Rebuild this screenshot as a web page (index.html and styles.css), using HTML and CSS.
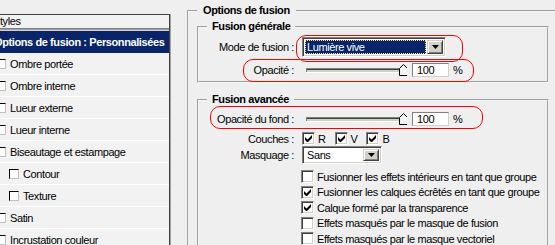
FILE: index.html
```html
<!DOCTYPE html>
<html lang="fr">
<head>
    <meta charset="UTF-8">
    <meta name="viewport" content="width=device-width, initial-scale=1.0">
    <title>Style de calque</title>
    <link rel="stylesheet" href="styles.css">
</head>
<body>
    <div class="dialog">
        <!-- Liste des styles -->
        <div class="styles-panel">
            <div class="panel-head">Styles</div>
            <div class="style-item selected">Options de fusion : Personnalisées</div>
            <div class="style-item"><span class="mini-box"></span>Ombre portée</div>
            <div class="style-item"><span class="mini-box"></span>Ombre interne</div>
            <div class="style-item"><span class="mini-box"></span>Lueur externe</div>
            <div class="style-item"><span class="mini-box"></span>Lueur interne</div>
            <div class="style-item"><span class="mini-box"></span>Biseautage et estampage</div>
            <div class="style-item sub"><span class="mini-box"></span>Contour</div>
            <div class="style-item sub"><span class="mini-box"></span>Texture</div>
            <div class="style-item"><span class="mini-box"></span>Satin</div>
            <div class="style-item"><span class="mini-box"></span>Incrustation couleur</div>
        </div>

        <!-- Options de fusion -->
        <div class="options">
            <fieldset class="group outer">
                <legend>Options de fusion</legend>

                <fieldset class="group general">
                    <legend>Fusion générale</legend>
                    <div class="form-row row-mode">
                        <span class="label">Mode de fusion :</span>
                        <div class="select blend focused">
                            <span class="select-value">Lumière vive</span>
                            <span class="select-btn"><svg width="7" height="4" viewBox="0 0 7 4"><polygon points="0,0 7,0 3.5,4" fill="#000"/></svg></span>
                        </div>
                    </div>
                    <div class="form-row row-opacity">
                        <span class="label">Opacité :</span>
                        <svg class="slider" width="105" height="14" viewBox="0 0 105 14">
                            <rect x="4" y="5" width="97" height="5" fill="#d4d0c8"/>
                            <line x1="4" y1="5.5" x2="101" y2="5.5" stroke="#808080"/>
                            <line x1="5" y1="6.5" x2="100" y2="6.5" stroke="#404040"/>
                            <line x1="4.5" y1="5" x2="4.5" y2="10" stroke="#808080"/>
                            <line x1="4" y1="9.5" x2="101" y2="9.5" stroke="#fff"/>
                            <polygon points="97.5,12.5 97.5,5.5 101.5,1.5 105.5,5.5 105.5,12.5" fill="#f4f4f4" stroke="#000"/>
                        </svg>
                        <span class="field">100</span>
                        <span class="unit">%</span>
                    </div>
                </fieldset>

                <fieldset class="group advanced">
                    <legend>Fusion avancée</legend>
                    <div class="form-row row-fill">
                        <span class="label">Opacité du fond :</span>
                        <svg class="slider" width="105" height="14" viewBox="0 0 105 14">
                            <rect x="4" y="5" width="97" height="5" fill="#d4d0c8"/>
                            <line x1="4" y1="5.5" x2="101" y2="5.5" stroke="#808080"/>
                            <line x1="5" y1="6.5" x2="100" y2="6.5" stroke="#404040"/>
                            <line x1="4.5" y1="5" x2="4.5" y2="10" stroke="#808080"/>
                            <line x1="4" y1="9.5" x2="101" y2="9.5" stroke="#fff"/>
                            <polygon points="97.5,12.5 97.5,5.5 101.5,1.5 105.5,5.5 105.5,12.5" fill="#f4f4f4" stroke="#000"/>
                        </svg>
                        <span class="field">100</span>
                        <span class="unit">%</span>
                    </div>
                    <div class="form-row row-channels">
                        <span class="label">Couches :</span>
                        <span class="check"><svg class="tick" width="7" height="7" viewBox="0 0 7 7"><path d="M0 2v3l2 2h1l4-4V0L2.5 4.5z" fill="#000"/></svg></span><span class="channel">R</span>
                        <span class="check"><svg class="tick" width="7" height="7" viewBox="0 0 7 7"><path d="M0 2v3l2 2h1l4-4V0L2.5 4.5z" fill="#000"/></svg></span><span class="channel">V</span>
                        <span class="check"><svg class="tick" width="7" height="7" viewBox="0 0 7 7"><path d="M0 2v3l2 2h1l4-4V0L2.5 4.5z" fill="#000"/></svg></span><span class="channel">B</span>
                    </div>
                    <div class="form-row row-knockout">
                        <span class="label">Masquage :</span>
                        <div class="select knockout">
                            <span class="select-value">Sans</span>
                            <span class="select-btn"><svg width="7" height="4" viewBox="0 0 7 4"><polygon points="0,0 7,0 3.5,4" fill="#000"/></svg></span>
                        </div>
                    </div>
                    <div class="check-list">
                        <div class="check-row"><span class="check"></span>Fusionner les effets intérieurs en tant que groupe</div>
                        <div class="check-row"><span class="check"><svg class="tick" width="7" height="7" viewBox="0 0 7 7"><path d="M0 2v3l2 2h1l4-4V0L2.5 4.5z" fill="#000"/></svg></span>Fusionner les calques écrêtés en tant que groupe</div>
                        <div class="check-row"><span class="check"><svg class="tick" width="7" height="7" viewBox="0 0 7 7"><path d="M0 2v3l2 2h1l4-4V0L2.5 4.5z" fill="#000"/></svg></span>Calque formé par la transparence</div>
                        <div class="check-row"><span class="check"></span>Effets masqués par le masque de fusion</div>
                        <div class="check-row"><span class="check"></span>Effets masqués par le masque vectoriel</div>
                    </div>
                </fieldset>
            </fieldset>
        </div>
    </div>

    <!-- Annotations rouges par-dessus le dialogue -->
    <span class="mark mark-mode"></span>
    <span class="mark mark-opacity"></span>
    <span class="mark mark-fill"></span>
</body>
</html>
```

FILE: styles.css
```css
/* Dialogue Style de calque */
body {
    margin: 0;
    width: 555px;
    height: 245px;
    overflow: hidden;
    position: relative;
    background-color: #efefef;
    font-family: 'Liberation Sans', Arial, sans-serif;
    font-size: 11px;
    letter-spacing: -0.4px;
    color: #000;
}

.dialog {
    display: flex;
    align-items: flex-start;
}

/* Liste de gauche */
.styles-panel {
    width: 179px;
    margin-left: -10px;
    margin-top: 14px;
    border-top: 1px solid #404040;
    border-right: 1px solid #404040;
    box-shadow: 1px 0 0 #a0a0a0;
    background-color: #f2f2f2;
    flex-shrink: 0;
}

.panel-head {
    height: 13px;
    line-height: 13px;
    padding-left: 3px;
    border-bottom: 1px solid #808080;
    box-shadow: 0 1px 0 #a0a0a0, 0 2px 0 #d4d0c8;
    margin-bottom: 2px;
}

.style-item {
    display: flex;
    align-items: center;
    height: 21px;
    border-bottom: 1px solid #fff;
    padding-left: 6px;
    white-space: nowrap;
}

.style-item.selected {
    height: 22px;
    padding-left: 4px;
    background-color: #0a246a;
    color: #fff;
    font-weight: bold;
    border-bottom: none;
}

.style-item.sub {
    padding-left: 19px;
}

.mini-box {
    width: 8px;
    height: 8px;
    margin-right: 4px;
    background-color: #fff;
    border: 1px solid #000;
    border-right-color: #c0c0c0;
    border-bottom-color: #c0c0c0;
    flex-shrink: 0;
}

/* Colonne de droite */
.options {
    flex: 1;
    padding-top: 4px;
    margin-left: 17px;
}

.group {
    margin: 0;
    padding: 0;
    border: 2px groove #f4f4f4;
    min-width: 0;
}

.group legend {
    font-weight: bold;
    line-height: 13px;
    padding: 0 6px;
    margin-left: 8px;
}

.outer {
    width: 376px;
    height: 260px;
}

.general {
    margin: 3px 16px 0 8px;
    padding: 4px 0 4px 0;
}

.advanced {
    margin: 10px 16px 0 8px;
    padding: 6px 0 0 0;
    height: 200px;
}

.group.general legend,
.group.advanced legend {
    padding: 0 5px;
}

.form-row {
    display: flex;
    align-items: center;
}

.label {
    width: 95px;
    margin-right: 8px;
    text-align: right;
    white-space: nowrap;
    flex-shrink: 0;
}

.row-mode {
    height: 20px;
}

.row-opacity {
    height: 14px;
    margin-top: 6px;
}

.row-fill {
    height: 14px;
}

.row-channels {
    height: 13px;
    margin-top: 6px;
}

.row-knockout {
    height: 18px;
    margin-top: 1px;
}

/* Listes déroulantes */
.select {
    display: flex;
    box-sizing: border-box;
    height: 100%;
    border: 1px solid;
    border-color: #808080 #fff #fff #808080;
    box-shadow: inset 1px 1px 0 #404040, inset -1px -1px 0 #d4d0c8;
    padding: 2px;
    background-color: #fff;
}

.select.blend {
    width: 144px;
}

.select.knockout {
    width: 80px;
}

.select-value {
    flex: 1;
    display: flex;
    align-items: center;
    padding-left: 2px;
    white-space: nowrap;
}

.select.focused .select-value {
    background-color: #0a246a;
    color: #fff;
    outline: 1px dotted #ffe98a;
    outline-offset: -1px;
    margin-right: 1px;
}

.select-btn {
    width: 16px;
    display: flex;
    align-items: center;
    justify-content: center;
    box-sizing: border-box;
    background-color: #d4d0c8;
    border: 1px solid;
    border-color: #d4d0c8 #404040 #404040 #d4d0c8;
    box-shadow: inset 1px 1px 0 #fff, inset -1px -1px 0 #808080;
}

/* Curseur et champ */
.slider {
    flex-shrink: 0;
}

.field {
    box-sizing: border-box;
    width: 37px;
    height: 14px;
    margin-left: 5px;
    padding-left: 4px;
    line-height: 12px;
    background-color: #fff;
    border: 1px solid;
    border-color: #808080 #d4d0c8 #d4d0c8 #808080;
}

.unit {
    margin-left: 4px;
}

/* Cases à cocher */
.check {
    box-sizing: border-box;
    width: 13px;
    height: 13px;
    flex-shrink: 0;
    display: flex;
    align-items: center;
    justify-content: center;
    background-color: #fff;
    border: 1px solid;
    border-color: #808080 #fff #fff #808080;
    box-shadow: inset 1px 1px 0 #404040, inset -1px -1px 0 #d4d0c8;
}

.channel {
    margin: 0 9px 0 3px;
}

.check-list {
    margin-left: 102px;
    margin-top: 6px;
}

.check-row {
    display: flex;
    align-items: center;
    gap: 3px;
    height: 13px;
    margin-bottom: 2.5px;
    white-space: nowrap;
}

/* Annotations rouges */
.mark {
    position: absolute;
    border: 1px solid #ff0000;
    border-radius: 10px;
}

.mark-mode {
    left: 296px;
    top: 35px;
    width: 165px;
    height: 25px;
}

.mark-opacity {
    left: 243px;
    top: 59px;
    width: 229px;
    height: 21px;
}

.mark-fill {
    left: 210px;
    top: 106px;
    width: 271px;
    height: 21px;
}
```
